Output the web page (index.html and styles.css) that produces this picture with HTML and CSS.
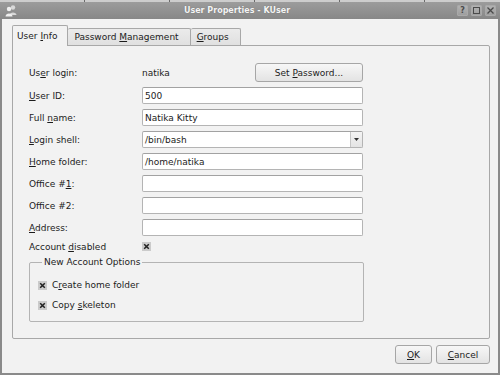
FILE: index.html
```html
<!DOCTYPE html>
<html>
<head>
<meta charset="utf-8">
<link rel="stylesheet" href="styles.css">
</head>
<body>
<div class="window">
  <div class="deskstrip"></div>
  <div class="titlebar">
    <span class="appicon">
      <svg width="12" height="13" viewBox="0 0 12 13">
        <circle cx="8" cy="3.5" r="2.2" fill="#d8d8d8"/>
        <path d="M4.5 11 C4.5 7.5 11.5 7.5 11.5 11 Z" fill="#d8d8d8"/>
        <circle cx="4" cy="5" r="2.2" fill="#efefef"/>
        <path d="M0.5 12.5 C0.5 8.5 7.5 8.5 7.5 12.5 Z" fill="#efefef"/>
      </svg>
    </span>
    <span class="title">User Properties - KUser</span>
    <div class="tbtns">
      <span class="tbtn"><span class="q">?</span></span>
      <span class="tbtn"><svg width="7" height="7" viewBox="0 0 7 7"><rect x="0.5" y="0.5" width="6" height="6" fill="none" stroke="#4a4a4a" stroke-width="1"/></svg></span>
      <span class="tbtn"><svg width="7" height="7" viewBox="0 0 7 7"><path d="M0.5 0.5 L6.5 6.5 M6.5 0.5 L0.5 6.5" stroke="#4a4a4a" stroke-width="1.3"/></svg></span>
    </div>
  </div>
  <div class="body">
    <div class="tabs">
      <div class="tab active"><span>User <u>I</u>nfo</span></div>
      <div class="tab"><span>Password <u>M</u>anagement</span></div>
      <div class="tab"><span><u>G</u>roups</span></div>
    </div>
    <div class="panel">
      <div class="form">
        <div class="label">Us<u>e</u>r login:</div>
        <div class="loginrow"><span class="value">natika</span><button class="btn setpw"><span>Set <u>P</u>assword...</span></button></div>
        <div class="label"><u>U</u>ser ID:</div>
        <div class="field"><span>500</span></div>
        <div class="label">Full <u>n</u>ame:</div>
        <div class="field"><span>Natika Kitty</span></div>
        <div class="label"><u>L</u>ogin shell:</div>
        <div class="field combo"><span class="ctext">/bin/bash</span><span class="carrow"><svg width="5" height="3" viewBox="0 0 5 3"><path d="M0 0 L5 0 L2.5 3 Z" fill="#333"/></svg></span></div>
        <div class="label"><u>H</u>ome folder:</div>
        <div class="field"><span>/home/natika</span></div>
        <div class="label">Office #<u>1</u>:</div>
        <div class="field"></div>
        <div class="label">Of<u>f</u>ice #2:</div>
        <div class="field"></div>
        <div class="label"><u>A</u>ddress:</div>
        <div class="field"></div>
        <div class="label check-label">Account <u>d</u>isabled</div>
        <div class="checkcell"><span class="cbox"><svg width="9" height="9" viewBox="0 0 9 9"><path d="M2.2 2.2 L6.8 6.8 M6.8 2.2 L2.2 6.8" stroke="#222" stroke-width="1.5"/></svg></span></div>
      </div>
      <fieldset class="group">
        <legend>New Account Options</legend>
        <div class="crow"><span class="cbox"><svg width="9" height="9" viewBox="0 0 9 9"><path d="M2.2 2.2 L6.8 6.8 M6.8 2.2 L2.2 6.8" stroke="#222" stroke-width="1.5"/></svg></span><span>C<u>r</u>eate home folder</span></div>
        <div class="crow"><span class="cbox"><svg width="9" height="9" viewBox="0 0 9 9"><path d="M2.2 2.2 L6.8 6.8 M6.8 2.2 L2.2 6.8" stroke="#222" stroke-width="1.5"/></svg></span><span>Copy <u>s</u>keleton</span></div>
      </fieldset>
    </div>
    <div class="buttons">
      <button class="btn ok"><span><u>O</u>K</span></button>
      <button class="btn cancel"><span><u>C</u>ancel</span></button>
    </div>
  </div>
</div>
</body>
</html>
```
FILE: styles.css
```css
* { box-sizing: border-box; }
html, body { margin: 0; padding: 0; }
body {
  width: 500px;
  height: 375px;
  overflow: hidden;
  font-family: "DejaVu Sans", sans-serif;
  font-size: 9px;
  color: #1c1c1c;
  background: #f2f2f2;
}
u { text-decoration-thickness: 1px; text-underline-offset: 1px; }
.window { width: 500px; height: 375px; display: flex; flex-direction: column; }
.deskstrip {
  height: 2px;
  background: repeating-linear-gradient(to right, #cdcdcd 0 84px, #6a6a6a 84px 85px);
}
.titlebar {
  height: 17px;
  background: linear-gradient(#9c9c9c, #878787);
  display: flex;
  align-items: center;
  padding: 0 4px 0 5px;
}
.appicon { width: 12px; height: 13px; display: flex; }
.title {
  flex: 1;
  text-align: center;
  font-weight: bold;
  font-size: 8px;
  line-height: 12px;
  color: #f4f4f4;
  text-shadow: 0 0 1px #666;
}
.tbtns { display: flex; gap: 3px; }
.tbtn {
  width: 11px;
  height: 11px;
  background: linear-gradient(#b2b2b2, #9e9e9e);
  border: 1px solid #a9a9a9;
  border-radius: 1px;
  display: flex;
  align-items: center;
  justify-content: center;
}
.q {
  font-size: 8px;
  font-weight: bold;
  color: #4a4a4a;
  line-height: 9px;
}
.body {
  flex: 1;
  border-left: 2px solid #8a8a8a;
  border-right: 2px solid #8a8a8a;
  border-bottom: 2px solid #8a8a8a;
  background: #f2f2f2;
  padding: 6px 8px 9px 10px;
  display: flex;
  flex-direction: column;
}
.tabs { display: flex; align-items: flex-end; height: 20px; }
.tab {
  height: 17px;
  padding: 0 11px 0 6px;
  border: 1px solid #a8a8a8;
  border-bottom: none;
  border-left: none;
  border-radius: 2px 2px 0 0;
  background: linear-gradient(#ebebeb, #e0e0e0);
  display: flex;
  align-items: center;
  white-space: pre;
}
.tab.active {
  height: 21px;
  margin-bottom: -1px;
  border-left: 1px solid #a8a8a8;
  background: #f2f2f2;
  padding: 0 10px 0 4px;
  position: relative;
  z-index: 1;
}
.panel {
  height: 294px;
  border: 1px solid #a8a8a8;
  border-radius: 0 2px 2px 2px;
  padding: 17px 0 0 16px;
}
.form {
  display: grid;
  grid-template-columns: 113px 221px;
  grid-template-rows: 19px repeat(7, 17px) 12px;
  row-gap: 5px;
  align-items: center;
}
.label { white-space: nowrap; line-height: 12px; }
.loginrow { display: flex; align-items: center; justify-content: space-between; height: 19px; }
.btn {
  font-family: "DejaVu Sans", sans-serif;
  font-size: 9px;
  color: #1c1c1c;
  height: 19px;
  border: 1px solid #a6a6a6;
  border-radius: 3px;
  background: linear-gradient(#f7f7f7, #e3e3e3);
  padding: 0;
  display: flex;
  align-items: center;
  justify-content: center;
  white-space: pre;
}
.setpw { width: 108px; }
.field {
  height: 17px;
  background: #fff;
  border: 1px solid #b4b4b4;
  border-top-color: #a2a2a2;
  border-radius: 2px;
  padding-left: 2px;
  display: flex;
  align-items: center;
  line-height: 12px;
}
.combo { padding-right: 0; }
.ctext { flex: 1; }
.carrow {
  width: 12px;
  height: 15px;
  border-left: 1px solid #c6c6c6;
  background: linear-gradient(#f4f4f4, #e4e4e4);
  display: flex;
  align-items: center;
  justify-content: center;
}
.check-label { margin-top: -1px; }
.checkcell { display: flex; align-items: center; height: 12px; margin-top: -1px; }
.cbox {
  width: 9px;
  height: 9px;
  background: #cbcbcb;
  display: flex;
}
.group {
  margin: 3px 0 0 0;
  width: 335px;
  height: 66px;
  border: 1px solid #b4b4b4;
  border-radius: 2px;
  padding: 11px 0 0 8px;
  display: flex;
  flex-direction: column;
  gap: 8px;
}
.group legend {
  margin-left: 4px;
  padding: 0 2px;
  line-height: 12px;
}
.crow { display: flex; align-items: center; gap: 5px; line-height: 12px; }
.buttons {
  display: flex;
  justify-content: flex-end;
  gap: 4px;
  margin-top: 6px;
}
.ok { width: 37px; }
.cancel { width: 54px; }
```
